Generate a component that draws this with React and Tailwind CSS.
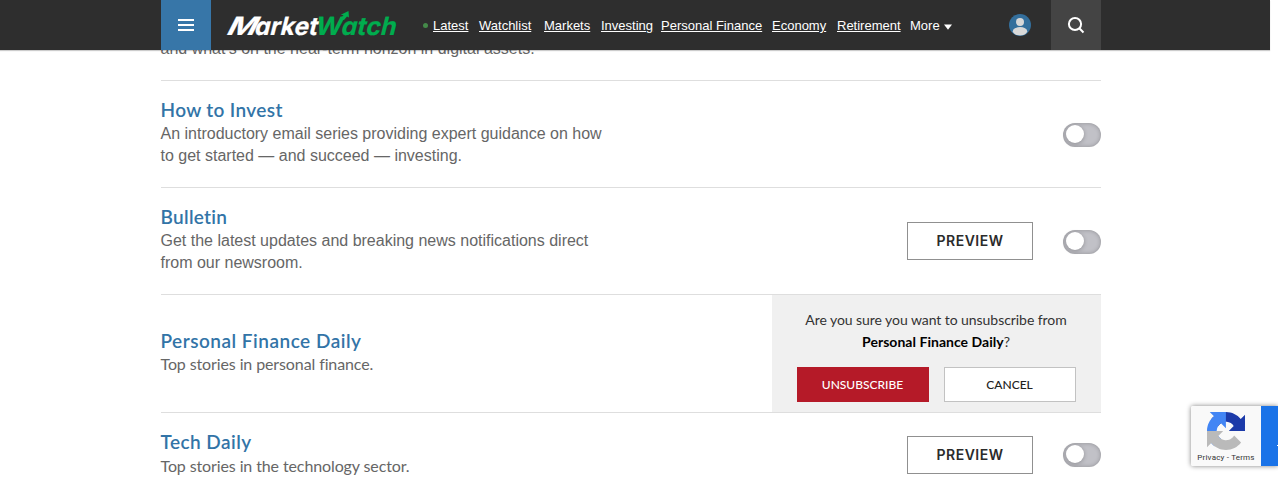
import React from "react";

const NAV = [
  ["Latest", "w-[36px]"],
  ["Watchlist", "w-[55px]"],
  ["Markets", "w-[47px]"],
  ["Investing", "w-[50px]"],
  ["Personal Finance", "w-[101px]"],
  ["Economy", "w-[55px]"],
  ["Retirement", "w-[63px]"],
];

function Logo() {
  return (
    <svg className="ml-[14px] h-[50px] w-[174px] shrink-0 overflow-visible" viewBox="0 0 174 50" role="img" aria-label="MarketWatch">
      <g className="font-['Inter',sans-serif] font-bold [font-feature-settings:'cv11'_1]" fontSize="25" strokeWidth="0.200">
        <text transform="translate(0 34.700) skewX(-27)" fill="#fff" stroke="#fff" textLength="29" lengthAdjust="spacingAndGlyphs">M</text>
        <text transform="translate(28.500 34.700) skewX(-14)" fill="#fff" stroke="#fff" textLength="63" lengthAdjust="spacingAndGlyphs">arket</text>
        <text transform="translate(89 34.700) skewX(-14)" fill="#00ac4e" stroke="#00ac4e" textLength="27" lengthAdjust="spacingAndGlyphs">W</text>
        <text transform="translate(115 34.700) skewX(-14)" fill="#00ac4e" stroke="#00ac4e" textLength="55" lengthAdjust="spacingAndGlyphs">atch</text>
      </g>
      <path d="M115 19 L118.500 15.300 L115.800 14.800 L123.500 11 L124 17.500 L122 16.500 L119 20 Z" fill="#00ac4e" />
    </svg>
  );
}

function Header() {
  return (
    <header className="relative z-10 h-[50px] w-[1270px] bg-[#2e2e2e] pl-[161px] shadow-[0_1px_1px_rgba(0,0,0,0.2)]">
      <div className="flex h-full w-[940px] items-center">
        <button className="flex h-[50px] w-[50px] shrink-0 flex-col items-center justify-center gap-[3px] bg-[#3776a8]">
          <span className="h-[2px] w-4 bg-white" />
          <span className="h-[2px] w-4 bg-white" />
          <span className="h-[2px] w-4 bg-white" />
        </button>
        <Logo />
        <nav className="ml-[24px] flex items-center gap-[10px] pt-[2px] font-['Liberation_Sans',Arial,sans-serif] text-[13px] leading-[16px] whitespace-nowrap text-white">
          <span className="-mr-[5px] h-[5px] w-[5px] -translate-y-px rounded-full bg-[#448a49]" />
          {NAV.map(([label, width]) => (
            <a key={label} className={`${width} underline`}>{label}</a>
          ))}
          <span className="flex items-center gap-[5px]">
            More
            <svg className="mt-[1px] -ml-px h-[6px] w-[8px]" viewBox="0 0 8 6"><path d="M0 0.500h8L4 5.800z" fill="#fff" /></svg>
          </span>
        </nav>
        <svg className="ml-auto h-[22px] w-[22px]" viewBox="0 0 22 22">
          <defs><clipPath id="avatar"><circle cx="11" cy="11" r="11" /></clipPath></defs>
          <circle cx="11" cy="11" r="11" fill="#346f9c" />
          <g fill="#d8d8d8" clipPath="url(#avatar)">
            <circle cx="11" cy="8" r="4" />
            <ellipse cx="11" cy="17.300" rx="7.200" ry="4.200" />
          </g>
        </svg>
        <button className="ml-5 flex h-[50px] w-[50px] items-center justify-center bg-[#444]">
          <svg className="h-[18px] w-[18px]" viewBox="0 0 18 18" fill="none" stroke="#fff" strokeWidth="2">
            <circle cx="8" cy="8" r="6.100" />
            <path d="M12.300 12.300 16.500 16.500" />
          </svg>
        </button>
      </div>
    </header>
  );
}

function Toggle() {
  return (
    <button className="h-[24px] w-[38px] rounded-full bg-[#c1c1c7] p-[2px] pl-[3px] shadow-[inset_0_0_4px_rgba(0,0,0,0.25)]">
      <span className="block h-[18px] w-[18px] -translate-y-px rounded-full bg-white shadow-[0_1px_4px_rgba(0,0,0,0.25)]" />
    </button>
  );
}

function Preview({ className }) {
  return (
    <button className={`${className} h-[38px] w-[126px] border border-[#909090] bg-white pb-px font-['Inter',sans-serif] text-[14px] font-semibold tracking-[0.5px] text-[#2b2b2b]`}>
      PREVIEW
    </button>
  );
}

function Row({ title, titleClass, height, pad, descClass, preview, children, controls, controlsClass = "mt-[27px]" }) {
  return (
    <section className={`${height} flex border-t border-[#dedede]`}>
      <div className={`${pad} flex-1`}>
        <h2 className={`${titleClass} -ml-[0.5px] font-['Lato',sans-serif] text-[19px] leading-[25px] font-semibold text-[#3274a7]`}>{title}</h2>
        <p className={`${descClass} -ml-[0.5px] text-[16px] leading-[22px] text-[#666]`}>{children}</p>
      </div>
      {controls || (
        <div className={`${controlsClass} flex h-[54px] items-center gap-[30px]`}>
          {preview && <Preview className={preview} />}
          <Toggle />
        </div>
      )}
    </section>
  );
}

const ARIAL = "mt-px font-['Liberation_Sans',Arial,sans-serif]";
const LATO = "tracking-[-0.11px] font-['Lato',sans-serif]";
const LATO_LOW = "mt-px tracking-[-0.11px] font-['Lato',sans-serif]";

function Confirm() {
  return (
    <aside className="flex h-[117px] w-[329px] flex-col items-center bg-[#f0f0f0] pt-[14px] font-['Lato',sans-serif]">
      <p className="-ml-px text-center text-[14px] leading-[22px] tracking-[-0.06px] text-[#333]">
        Are you sure you want to unsubscribe from<br />
        <b className="font-bold tracking-[0.03px] text-black">Personal Finance Daily</b>?
      </p>
      <div className="mt-[14px] flex gap-[15px] text-[12px] font-medium">
        <button className="h-[35px] w-[132px] bg-[#b51a28] pr-px text-white">UNSUBSCRIBE</button>
        <button className="h-[35px] w-[132px] border border-[#c2c2c2] bg-white pr-px text-[#222]">CANCEL</button>
      </div>
    </aside>
  );
}

function Recaptcha() {
  return (
    <div className="absolute top-[406px] left-[1191px] z-20 flex h-[60px] w-[87px] rounded-l-[2px] shadow-[0_0_5px_gray]">
      <div className="flex w-[70px] flex-col items-center rounded-l-[2px] bg-[#f9f9f9] pt-[6px]">
        <svg className="h-[38px] w-[38px]" viewBox="0 0 64 64">
          <path fill="#1c3aa9" d="M64 31.955l-.033-1.370V4.687l-7.160 7.160C50.948 4.674 42.033.093 32.050.093c-10.389 0-19.622 4.960-25.458 12.640l11.736 11.860a15.550 15.550 0 0 1 4.754-5.334c2.050-1.600 4.952-2.906 8.968-2.906.485 0 .860.057 1.135.163 4.976.393 9.288 3.140 11.828 7.124l-8.307 8.307L64 31.953" />
          <path fill="#4285f4" d="M31.862.094l-1.370.033H4.594l7.160 7.160C4.580 13.147 0 22.060 0 32.046c0 10.388 4.960 19.622 12.640 25.458L24.500 45.768a15.550 15.550 0 0 1-5.334-4.754c-1.600-2.050-2.906-4.952-2.906-8.968 0-.485.057-.860.163-1.135.393-4.976 3.140-9.288 7.124-11.828l8.307 8.307L31.860.095" />
          <path fill="#bababa" d="M.001 32.045l.033 1.370v25.898l7.160-7.160c5.860 7.173 14.774 11.754 24.760 11.754 10.388 0 19.622-4.960 25.458-12.640l-11.736-11.860a15.550 15.550 0 0 1-4.754 5.334c-2.050 1.600-4.952 2.906-8.968 2.906-.485 0-.860-.057-1.135-.163-4.976-.393-9.288-3.140-11.828-7.124l8.307-8.307c-10.522.040-22.400.066-27.295-.005" />
        </svg>
        <span className="mt-[3px] font-['Roboto',sans-serif] text-[8px] leading-[10px] tracking-[0.2px] whitespace-nowrap text-[#333]">Privacy - Terms</span>
      </div>
      <div className="flex flex-1 justify-end bg-[#1a73e8] pt-[39px]"><span className="h-px w-px bg-white" /></div>
    </div>
  );
}

export default function App() {
  return (
    <div className="relative h-[497px] w-[1278px] overflow-hidden bg-white">
      <Header />
      <main className="-mt-[12px] ml-[161px] w-[940px]">
        <div className="h-[42px]">
          <p className="-ml-[0.5px] w-[450px] font-['Liberation_Sans',Arial,sans-serif] text-[16px] leading-[22px] text-[#666]">and what’s on the near-term horizon in digital assets.</p>
        </div>
        <Row title="How to Invest" titleClass="tracking-[0.35px]" height="h-[107px]" pad="pt-[16px]" descClass={ARIAL}>
          An introductory email series providing expert guidance on how<br />to get started — and succeed — investing.
        </Row>
        <Row title="Bulletin" titleClass="tracking-[0.3px]" height="h-[107px]" pad="pt-[16px]" descClass={ARIAL} preview="mb-[2px]">
          Get the latest updates and breaking news notifications direct<br />from our newsroom.
        </Row>
        <Row title="Personal Finance Daily" titleClass="tracking-[0.5px]" height="h-[118px]" pad="pt-[33px]" descClass={LATO} controls={<Confirm />}>
          Top stories in personal finance.
        </Row>
        <Row title="Tech Daily" titleClass="tracking-[0.45px]" height="h-[107px]" pad="pt-[16px]" descClass={LATO_LOW} preview="mb-0" controlsClass="mt-[15px]">
          Top stories in the technology sector.
        </Row>
      </main>
      <Recaptcha />
    </div>
  );
}
